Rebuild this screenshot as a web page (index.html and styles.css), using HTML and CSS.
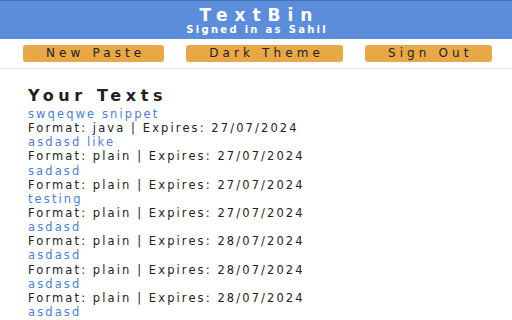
FILE: index.html
```html
<!DOCTYPE html>
<html lang="en">
<head>
  <meta charset="UTF-8" />
  <title>TextBin</title>
  <link rel="stylesheet" href="styles.css">
</head>
<body>
  <header class="top">
    <h1 class="brand">TextBin</h1>
    <p class="signed">Signed in as Sahil</p>
  </header>

  <nav class="actions">
    <button type="button" class="btn">New Paste</button>
    <button type="button" class="btn">Dark Theme</button>
    <button type="button" class="btn">Sign Out</button>
  </nav>

  <main class="content">
    <h2 class="title">Your Texts</h2>
    <ul class="texts">
      <li><a href="#">swqeqwe snippet</a><span>Format: java | Expires: 27/07/2024</span></li>
      <li><a href="#">asdasd like</a><span>Format: plain | Expires: 27/07/2024</span></li>
      <li><a href="#">sadasd</a><span>Format: plain | Expires: 27/07/2024</span></li>
      <li><a href="#">testing</a><span>Format: plain | Expires: 27/07/2024</span></li>
      <li><a href="#">asdasd</a><span>Format: plain | Expires: 28/07/2024</span></li>
      <li><a href="#">asdasd</a><span>Format: plain | Expires: 28/07/2024</span></li>
      <li><a href="#">asdasd</a><span>Format: plain | Expires: 28/07/2024</span></li>
      <li><a href="#">asdasd</a></li>
    </ul>
  </main>
</body>
</html>
```

FILE: styles.css
```css
body {
  font-family: "DejaVu Sans", sans-serif;
  margin: 0;
  padding: 0;
  background: #fff;
  color: #222;
  overflow: hidden;
}

.top {
  background-color: #5b8dda;
  border-top: 1px solid #4472b8;
  color: #fff;
  text-align: center;
  display: flex;
  flex-direction: column;
  align-items: center;
  padding-top: 5px;
  box-sizing: border-box;
  height: 39px;
}

.brand {
  margin: 0;
  font-size: 17px;
  line-height: 18px;
  letter-spacing: 7px;
  margin-right: -7px;
}

.signed {
  margin: 0;
  font-size: 10px;
  font-weight: bold;
  line-height: 11px;
  letter-spacing: 2.3px;
  margin-right: -2.3px;
}

.actions {
  display: flex;
  gap: 22px;
  padding: 6px 0 6px 23px;
  border-bottom: 1px solid #e6e6e6;
}

.btn {
  font-family: "DejaVu Sans", sans-serif;
  font-size: 12px;
  letter-spacing: 4.1px;
  line-height: 17px;
  height: 17px;
  padding: 0 19px 0 23px;
  background-color: #e9a846;
  color: #222;
  border: none;
  border-radius: 3px;
}

.content {
  padding: 0 28px;
}

.title {
  font-size: 16px;
  letter-spacing: 4.6px;
  margin: 17px 0 1px;
  line-height: 20px;
}

.texts {
  list-style: none;
  margin: 0;
  padding: 0;
  font-size: 11.5px;
  line-height: 14.14px;
  letter-spacing: 2.1px;
}

.texts a,
.texts span {
  display: block;
  white-space: nowrap;
}

.texts a {
  color: #4a80d9;
  text-decoration: none;
}
```
